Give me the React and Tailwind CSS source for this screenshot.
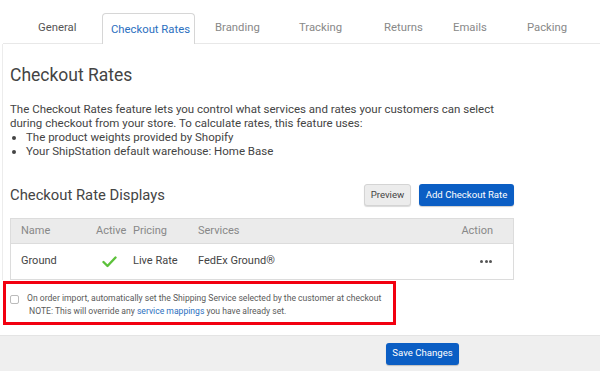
import React from 'react';

const tabs = [
    { label: 'General', w: 'w-[72px]', cls: 'text-[#555]' },
    { label: 'Checkout Rates', w: 'w-[93px]', active: true },
    { label: 'Branding', w: 'w-[84px] ml-[12px]', cls: 'text-[#888]' },
    { label: 'Tracking', w: 'w-[85px]', cls: 'text-[#888]' },
    { label: 'Returns', w: 'w-[69px]', cls: 'text-[#888]' },
    { label: 'Emails', w: 'w-[74px]', cls: 'text-[#888]' },
    { label: 'Packing', w: 'w-[70px]', cls: 'text-[#888]' },
];

const Check = () => (
    <svg width="15" height="12" viewBox="0 0 15 12" fill="none">
        <path d="M1.5 6 L5.5 10 L13.5 1.5" stroke="#5cc13a" strokeWidth="2.4" strokeLinecap="round" strokeLinejoin="round" />
    </svg>
);

const App = () => {
    return (
        <div className="w-[600px] h-[371px] bg-white flex flex-col overflow-hidden font-['Roboto',sans-serif]">
            {/* Tabs */}
            <div className="h-[44px] shrink-0 flex items-end border-b border-[#e8e8e8] pl-[27px] ml-[3px]">
                {tabs.map((t) =>
                    t.active ? (
                        <div
                            key={t.label}
                            className={`${t.w} h-[31px] -mb-px flex items-center pt-[2px] pl-[8px] bg-white border border-b-0 border-[#d6d6d6] rounded-t-[4px] text-[11.3px] whitespace-nowrap text-[#2b6fc0]`}
                        >
                            {t.label}
                        </div>
                    ) : (
                        <div key={t.label} className={`${t.w} h-[31px] flex items-center pt-[1px] pl-[8px] text-[11.3px] whitespace-nowrap ${t.cls}`}>
                            {t.label}
                        </div>
                    )
                )}
            </div>

            {/* Body */}
            <div className="flex flex-col ml-[2px] border-l border-[#ececec] pl-[7px]">
                <h1 className="mt-[19px] text-[17.5px] leading-[24px] text-[#444]">Checkout Rates</h1>
                <div className="mt-[15px] text-[11.5px] leading-[14px] text-[#444] whitespace-nowrap">
                    <p>The Checkout Rates feature lets you control what services and rates your customers can select</p>
                    <p>during checkout from your store. To calculate rates, this feature uses:</p>
                    <ul className="list-disc pl-[16px]">
                        <li>The product weights provided by Shopify</li>
                        <li>Your ShipStation default warehouse: Home Base</li>
                    </ul>
                </div>

                <div className="mt-[26px] h-[22px] w-[504px] flex items-center justify-between">
                    <h2 className="text-[14.8px] text-[#444]">Checkout Rate Displays</h2>
                    <div className="flex gap-[8px]">
                        <button className="h-[22px] w-[47px] text-[9.6px] text-[#444] bg-[#ececec] border border-[#d4d4d4] rounded-[3px] shadow-[0_1px_1px_rgba(0,0,0,0.15)]">
                            Preview
                        </button>
                        <button className="h-[22px] w-[95px] text-[9.6px] whitespace-nowrap text-white bg-[#0b5ec4] rounded-[3px] shadow-[0_1px_1px_rgba(0,0,0,0.2)]">
                            Add Checkout Rate
                        </button>
                    </div>
                </div>

                {/* Table */}
                <div className="mt-[12px] w-[504px] border border-[#dcdcdc] text-[11px]">
                    <div className="h-[25px] bg-[#ebebeb] border-b border-[#dcdcdc] flex items-center text-[#888]">
                        <div className="w-[85px] pl-[10px]">Name</div>
                        <div className="w-[37px]">Active</div>
                        <div className="w-[65px]">Pricing</div>
                        <div className="flex-1">Services</div>
                        <div className="pr-[20px]">Action</div>
                    </div>
                    <div className="h-[35px] flex items-center text-[#444]">
                        <div className="w-[85px] pl-[10px]">Ground</div>
                        <div className="w-[37px] pl-[6px] flex items-center"><Check /></div>
                        <div className="w-[65px]">Live Rate</div>
                        <div className="flex-1">FedEx Ground®</div>
                        <div className="pr-[21px] flex gap-[1.5px] items-center">
                            <span className="w-[3px] h-[3px] rounded-full bg-[#555]" />
                            <span className="w-[3px] h-[3px] rounded-full bg-[#555]" />
                            <span className="w-[3px] h-[3px] rounded-full bg-[#555]" />
                        </div>
                    </div>
                </div>
            </div>

            {/* Highlighted option */}
            <div className="ml-[3px] mt-[1px] w-[393px] h-[44px] border-[3px] border-[#f20010]">
                <div className="h-full flex items-start pt-[8px] pl-[4px] gap-[8px] text-[8.6px] leading-[13px] text-[#5a5a5a] whitespace-nowrap">
                    <span className="mt-[3px] w-[9px] h-[9px] border border-[#bbb] rounded-[2px] bg-white shrink-0" />
                    <div>
                        <div>On order import, automatically set the Shipping Service selected by the customer at checkout</div>
                        <div className="pl-[2px]">
                            NOTE: This will override any <span className="text-[#2b6fc0]">service mappings</span> you have already set.
                        </div>
                    </div>
                </div>
            </div>

            {/* Footer */}
            <div className="mt-[10px] flex-1 bg-[#efefef] border-t border-[#e4e4e4] flex items-center pl-[386px]">
                <button className="h-[22px] w-[73px] text-[9.6px] whitespace-nowrap text-white bg-[#0b5ec4] rounded-[3px] shadow-[0_1px_1px_rgba(0,0,0,0.2)]">
                    Save Changes
                </button>
            </div>
        </div>
    );
};

export default App;
